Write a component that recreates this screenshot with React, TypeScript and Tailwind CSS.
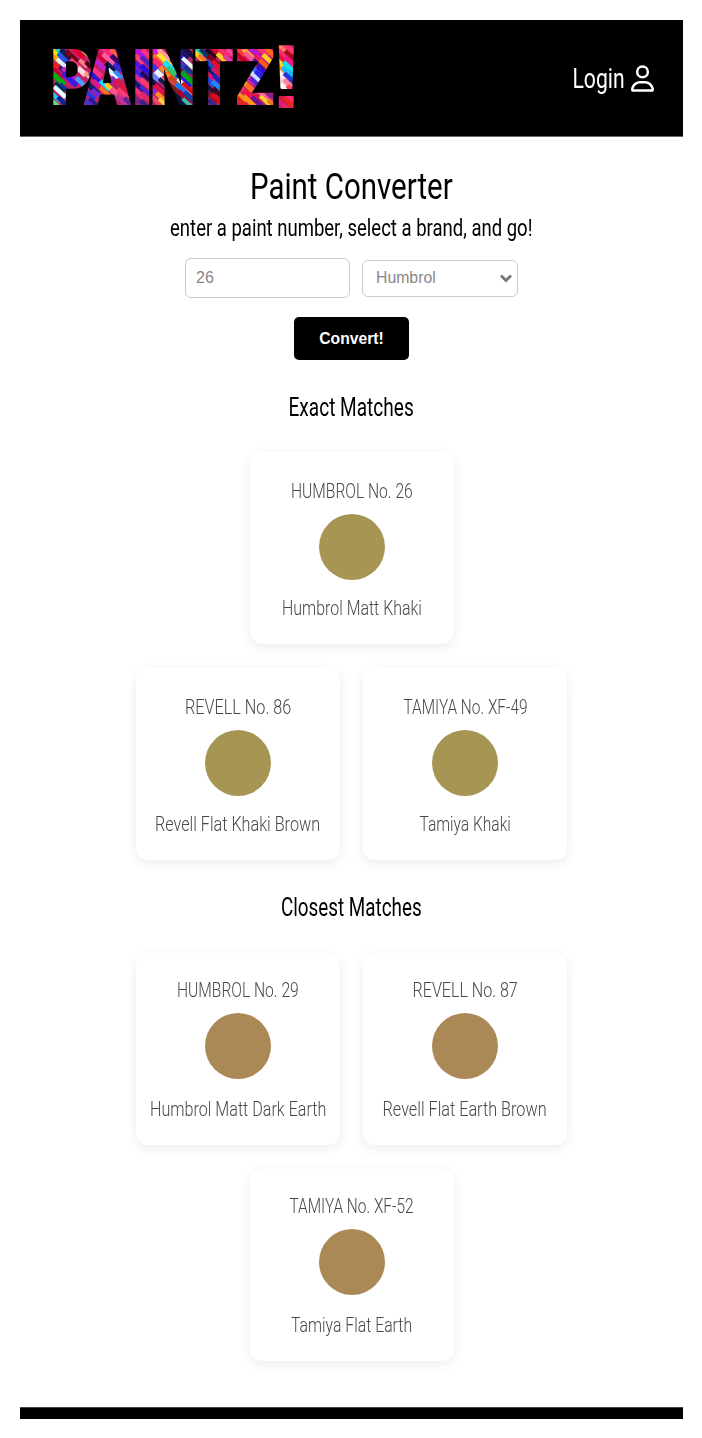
import { useLayoutEffect, useRef } from "react";
import { FaRegUser } from "react-icons/fa6";

type FitProps = { text: string; width: number; className?: string };

// Condenses a single line of text to a given width.
function FitText({ text, width, className = "" }: FitProps) {
  const ref = useRef<HTMLSpanElement>(null);
  useLayoutEffect(() => {
    const el = ref.current;
    if (el) el.style.transform = `scaleX(${width / el.offsetWidth})`;
  }, [text, width]);
  return (
    <span className={`flex justify-center whitespace-nowrap font-['Roboto','Liberation_Sans',sans-serif] ${className}`} style={{ width }}>
      <span ref={ref} className="inline-block shrink-0 origin-center">{text}</span>
    </span>
  );
}

// [centre x, centre y, length, thickness, colour]
type Stroke = [number, number, number, number, string];
const strokes: Stroke[] = [
  // P
  [165, 158, 40, 16, "#ffe100"], [180, 156, 40, 12, "#19d7c8"], [200, 165, 60, 16, "#061a6b"], [215, 170, 60, 16, "#6b0014"],
  [236, 160, 50, 14, "#e00030"], [258, 160, 40, 10, "#ffd21a"], [225, 192, 50, 14, "#ff3d78"], [250, 190, 40, 12, "#ff7d7d"],
  [266, 195, 30, 12, "#40001c"], [245, 214, 40, 16, "#ffd9e0"], [262, 225, 26, 14, "#ff9a8a"], [170, 178, 40, 12, "#ff9d00"],
  [185, 190, 50, 12, "#d8f6ff"], [188, 174, 50, 12, "#1c55e8"], [168, 200, 30, 12, "#ff1a00"], [190, 212, 40, 12, "#3b0f80"],
  [175, 220, 50, 12, "#c2003e"], [176, 238, 60, 16, "#00b010"], [205, 220, 60, 14, "#cf1fd0"], [210, 238, 70, 16, "#3a18e8"],
  [240, 244, 40, 14, "#4d9cff"], [180, 262, 50, 12, "#062f48"], [180, 276, 60, 14, "#e6fbff"], [192, 262, 40, 10, "#122e9c"],
  [168, 292, 50, 12, "#22cfe8"], [188, 305, 50, 14, "#0a2394"], [165, 310, 30, 12, "#68e07c"],
  // A
  [320, 155, 50, 16, "#ff2680"], [342, 158, 40, 14, "#ff5a4a"], [302, 172, 50, 14, "#d00038"], [326, 178, 60, 14, "#ff5f9a"],
  [348, 180, 50, 14, "#3b0070"], [303, 196, 50, 14, "#c51bd2"], [332, 202, 50, 16, "#0b1550"], [354, 202, 40, 14, "#3526d8"],
  [290, 216, 50, 14, "#ff3188"], [287, 235, 60, 14, "#2d17df"], [338, 222, 50, 14, "#dfefff"], [355, 224, 40, 12, "#3189ff"],
  [292, 252, 40, 12, "#e01892"], [315, 256, 50, 14, "#17d8ff"], [332, 265, 50, 14, "#ffd01f"], [315, 275, 50, 12, "#ff7614"],
  [348, 246, 50, 14, "#8427c2"], [363, 257, 60, 14, "#df173f"], [278, 266, 60, 16, "#071b74"], [270, 285, 50, 14, "#2c36ef"],
  [290, 280, 44, 12, "#6f26e9"], [260, 306, 60, 14, "#4630e0"], [280, 306, 40, 12, "#281a91"], [346, 280, 50, 14, "#ff4d8e"],
  [370, 282, 60, 14, "#f53d72"], [366, 302, 60, 14, "#bd329b"], [386, 306, 44, 14, "#5d2797"],
  // I
  [418, 158, 50, 14, "#b019dc"], [438, 160, 40, 12, "#ff3479"], [418, 178, 50, 14, "#ff3d70"], [438, 184, 50, 14, "#4d21c9"],
  [418, 200, 60, 14, "#5114e7"], [438, 210, 50, 14, "#2a0ae0"], [415, 220, 50, 14, "#3722f0"], [438, 230, 50, 12, "#180d55"],
  [418, 240, 50, 14, "#dc2a8a"], [436, 250, 50, 12, "#ff3b6a"], [418, 260, 60, 14, "#0f1d7e"], [436, 272, 50, 12, "#5920d3"],
  [418, 280, 50, 14, "#f1337a"], [438, 292, 50, 14, "#de2864"], [414, 303, 50, 14, "#7c218f"], [434, 312, 40, 12, "#34208b"],
  // N
  [472, 158, 50, 14, "#e319da"], [492, 164, 60, 14, "#ff9b9b"], [474, 178, 50, 14, "#ff6a21"], [494, 180, 70, 14, "#ffe234"],
  [482, 198, 70, 16, "#ff2571"], [510, 202, 60, 18, "#22dcec"], [468, 207, 50, 14, "#3b31ee"], [500, 220, 70, 14, "#ff8a16"],
  [520, 218, 60, 14, "#32c56b"], [484, 229, 60, 18, "#e8f5ff"], [466, 232, 40, 14, "#6e80ff"], [492, 249, 50, 12, "#10204f"],
  [506, 243, 60, 14, "#f33d60"], [526, 246, 60, 14, "#c9471b"], [470, 256, 60, 14, "#17085b"], [482, 270, 60, 14, "#e71145"],
  [470, 280, 50, 14, "#9827c8"], [484, 292, 50, 14, "#ff901c"], [470, 304, 50, 14, "#f94065"], [490, 308, 44, 12, "#ffd93b"],
  [525, 270, 70, 14, "#6c2516"], [530, 292, 70, 16, "#041244"], [548, 158, 60, 16, "#1b1268"], [568, 158, 50, 14, "#180a44"],
  [550, 180, 60, 16, "#3b1ee9"], [565, 190, 60, 12, "#eafff5"], [550, 202, 60, 12, "#263dd5"], [566, 210, 40, 12, "#11377d"],
  [555, 222, 60, 12, "#6d103e"], [565, 235, 70, 16, "#00a51e"], [550, 242, 70, 14, "#251ae6"], [556, 258, 80, 12, "#e4effa"],
  [565, 265, 60, 12, "#d20a14"], [548, 270, 70, 14, "#167cff"], [553, 290, 70, 14, "#b00031"], [568, 290, 50, 14, "#0843a0"],
  [562, 310, 50, 14, "#3bbba2"], [540, 306, 50, 14, "#071544"],
  // T
  [598, 154, 40, 14, "#12d0c5"], [596, 168, 50, 14, "#ffd91f"], [616, 161, 50, 14, "#07345e"], [610, 178, 50, 12, "#f57c25"],
  [634, 160, 50, 14, "#26021b"], [652, 158, 50, 14, "#d80b37"], [672, 158, 50, 14, "#ff2d65"], [692, 158, 40, 12, "#fa42a0"],
  [666, 174, 50, 14, "#ffce24"], [684, 178, 40, 14, "#e23aa0"], [640, 180, 50, 14, "#850018"], [632, 196, 50, 14, "#104bdc"],
  [654, 200, 60, 14, "#e60a36"], [634, 214, 60, 14, "#061b78"], [654, 220, 60, 14, "#cf1d53"], [634, 232, 50, 14, "#e3195c"],
  [654, 238, 50, 14, "#2c1cbf"], [636, 250, 60, 14, "#2146ef"], [654, 260, 60, 14, "#178cff"], [634, 270, 50, 12, "#071749"],
  [654, 278, 50, 14, "#45031b"], [636, 290, 60, 14, "#7f142a"], [653, 298, 60, 14, "#dc0719"], [636, 310, 40, 14, "#32268d"],
  // Z
  [724, 155, 40, 14, "#ff3b35"], [722, 173, 50, 14, "#cb0028"], [744, 160, 50, 14, "#ffab49"], [752, 174, 60, 14, "#ff5791"],
  [770, 160, 60, 14, "#b114d5"], [790, 156, 50, 14, "#ff2d7c"], [812, 158, 50, 14, "#ff6c19"], [782, 178, 50, 14, "#eb146d"],
  [806, 180, 60, 14, "#ffd21b"], [796, 196, 60, 14, "#ff5b1f"], [776, 196, 60, 14, "#4a1387"], [786, 214, 50, 14, "#3410dc"],
  [764, 210, 60, 14, "#3569ff"], [762, 226, 60, 14, "#c6ddff"], [784, 230, 60, 14, "#2920e8"], [750, 240, 50, 14, "#e52d8c"],
  [766, 248, 50, 14, "#5a22da"], [740, 255, 60, 14, "#ffe01e"], [754, 268, 60, 14, "#ff6f1c"], [732, 272, 50, 14, "#eb3569"],
  [748, 286, 60, 14, "#f51446"], [724, 290, 50, 14, "#ff8b20"], [724, 306, 50, 14, "#df261e"], [748, 304, 60, 14, "#fa9819"],
  [772, 290, 50, 14, "#d9144e"], [772, 306, 60, 14, "#6b158d"], [794, 290, 50, 14, "#ff5ba2"], [798, 304, 60, 12, "#ffd32e"],
  [814, 290, 40, 14, "#8a2291"], [816, 310, 40, 14, "#f5751b"],
  // !
  [846, 145, 40, 16, "#ff7a63"], [868, 146, 50, 16, "#ff356e"], [846, 162, 50, 14, "#fb2b72"], [870, 166, 50, 14, "#a90723"],
  [848, 178, 50, 14, "#e3193d"], [870, 184, 50, 14, "#f6188b"], [846, 194, 50, 14, "#ffdc20"], [868, 202, 60, 14, "#10e1ed"],
  [844, 210, 40, 14, "#ff9b15"], [864, 218, 60, 14, "#12bcff"], [846, 226, 50, 16, "#fff0eb"], [870, 236, 60, 14, "#2635d8"],
  [846, 244, 50, 16, "#ffd0db"], [866, 252, 50, 14, "#fb86a0"], [854, 266, 50, 14, "#fff"], [874, 268, 40, 14, "#ff405d"],
  [850, 295, 50, 14, "#c91c48"], [872, 294, 50, 14, "#ff2875"], [846, 312, 50, 14, "#e51375"], [870, 310, 60, 14, "#ee2520"],
  [860, 324, 40, 12, "#e12872"],
];

// [glyph, x, advance, font size, baseline, family]
const glyphs: [string, number, number, number, number, string][] = [
  ["P", 151, 127, 232, 316, "Inter, sans-serif"],
  ["A", 247, 151, 232, 316, "Inter, sans-serif"],
  ["I", 396, 61, 232, 316, "Inter, sans-serif"],
  ["N", 449, 137, 232, 316, "Inter, sans-serif"],
  ["T", 581, 122, 232, 316, "Inter, sans-serif"],
  ["Z", 702, 127, 232, 316, "Inter, sans-serif"],
  ["!", 806, 106, 272, 325, "'Liberation Sans', Arial, sans-serif"],
];

function Logo() {
  return (
    <svg className="h-[66px] w-[244px]" viewBox="156 132 732 198" role="img" aria-label="PAINTZ!">
      <defs>
        <clipPath id="letters">
          {glyphs.map(([g, x, w, size, y, family]) => (
            <text key={g} x={x} y={y} textLength={w} lengthAdjust="spacingAndGlyphs" fontSize={size} fontFamily={family} fontWeight={900}>
              {g}
            </text>
          ))}
        </clipPath>
        <filter id="soft" x="0" y="0" width="1" height="1">
          <feGaussianBlur stdDeviation="1.8" />
        </filter>
      </defs>
      <g clipPath="url(#letters)">
        <g filter="url(#soft)">
          <rect x="130" y="110" width="790" height="240" fill="#c02468" />
          {strokes.map(([x, y, len, t, color], i) => (
            <line key={i} x1={x - len * 0.29} y1={y - len * 0.27} x2={x + len * 0.29} y2={y + len * 0.27} stroke={color} strokeWidth={t} />
          ))}
        </g>
      </g>
    </svg>
  );
}

type Paint = { code: string; codeW: number; name: string; nameW: number };

const exact: Paint[] = [
  { code: "HUMBROL No. 26", codeW: 122, name: "Humbrol Matt Khaki", nameW: 140 },
  { code: "REVELL No. 86", codeW: 106, name: "Revell Flat Khaki Brown", nameW: 165 },
  { code: "TAMIYA No. XF-49", codeW: 124, name: "Tamiya Khaki", nameW: 91 },
];
const closest: Paint[] = [
  { code: "HUMBROL No. 29", codeW: 122, name: "Humbrol Matt Dark Earth", nameW: 176 },
  { code: "REVELL No. 87", codeW: 105, name: "Revell Flat Earth Brown", nameW: 164 },
  { code: "TAMIYA No. XF-52", codeW: 124, name: "Tamiya Flat Earth", nameW: 121 },
];

function Card({ paint, swatch, pad = "pt-[27px]", gap = "mb-4" }: { paint: Paint; swatch: string; pad?: string; gap?: string }) {
  return (
    <article className={`flex h-48 w-[204px] flex-col items-center rounded-xl bg-white text-[20.5px] leading-6 font-light text-[#484848] shadow-[0_3px_12px_rgba(0,0,0,0.08)] ${pad}`}>
      <FitText text={paint.code} width={paint.codeW} />
      <div className={`mt-[11px] size-[66px] shrink-0 rounded-full ${gap} ${swatch}`} />
      <FitText text={paint.name} width={paint.nameW} />
    </article>
  );
}

export default function App() {
  return (
    <div className="min-h-[1438px] bg-white p-5 pr-[19px] pb-[19px]">
      <header className="flex h-[117px] items-start justify-between border-b border-[#666] bg-black pt-6 pr-[29px] pl-8 text-white">
        <Logo />
        <a className="mt-[19px] flex items-center gap-[6px] text-[28px] leading-8">
          <FitText text="Login" width={52} className="font-normal" />
          <FaRegUser className="mb-[2px] h-[27px] w-[23px]" />
        </a>
      </header>

      <main className="flex flex-col items-center pt-[30px] text-black">
        <h1 className="text-[37px] leading-10 font-normal"><FitText text="Paint Converter" width={203} /></h1>
        <h2 className="mt-[7px] text-[23px] leading-[30px] font-normal"><FitText text="enter a paint number, select a brand, and go!" width={362} /></h2>

        <form className="mt-[14px] flex flex-col items-center font-['Liberation_Sans',Arial,sans-serif] text-[16px]">
          <div className="flex items-center gap-3">
            <input className="h-10 w-[165px] rounded-md border border-[#ccc] bg-white px-[10px] text-[#888] outline-none" defaultValue="26" />
            <div className="relative flex">
              <select className="h-[37px] w-[156px] appearance-none rounded-md border border-[#ccc] bg-white px-[13px] text-[15.8px] text-[#888] outline-none" defaultValue="Humbrol">
                <option>Humbrol</option>
                <option>Revell</option>
                <option>Tamiya</option>
              </select>
              <svg className="pointer-events-none absolute top-[14px] right-[6px] h-[9px] w-3" viewBox="0 0 12 9" fill="none" stroke="#777" strokeWidth="2.8">
                <path d="M1 1.6 6 6.6l5-5" />
              </svg>
            </div>
          </div>
          <button type="button" className="mt-[19px] h-[43px] w-[115px] rounded-[5px] bg-black text-[15.7px] font-bold text-white">Convert!</button>
        </form>

        <h3 className="mt-[33px] text-[25px] leading-[30px] font-normal"><FitText text="Exact Matches" width={125} /></h3>
        <section className="mt-[29px] flex flex-col items-center gap-6">
          <Card paint={exact[0]} swatch="bg-[#a79554]" />
          <div className="flex gap-[23px]">
            {exact.slice(1).map((p) => <Card key={p.code} paint={p} swatch="bg-[#a79554]" />)}
          </div>
        </section>

        <h3 className="mt-[33px] text-[25px] leading-[30px] font-normal"><FitText text="Closest Matches" width={141} /></h3>
        <section className="mt-[30px] flex w-[460px] flex-wrap justify-center gap-x-[23px] gap-y-6">
          {closest.map((p) => <Card key={p.code} paint={p} swatch="bg-[#aa8957]" pad="pt-[25px]" gap="mb-[18px]" />)}
        </section>
      </main>

      <footer className="mt-[46px] h-3 border-t border-[#444] bg-black" />
    </div>
  );
}
